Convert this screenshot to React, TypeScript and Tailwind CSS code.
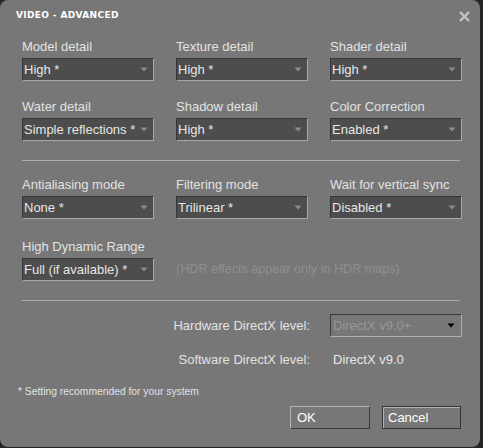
import React from "react";

function Arrow({ dark = false }: { dark?: boolean }) {
  return (
    <svg width="8" height="5" viewBox="0 0 8 5" className="shrink-0">
      <path d="M0.5 0.5 L7.5 0.5 L4 4.5 Z" fill={dark ? "#000000" : "#8c8c8c"} />
    </svg>
  );
}

function Select({ value }: { value: string }) {
  return (
    <div className="mt-[4px] h-[23px] flex items-center justify-between bg-[#4d4d4d] border border-t-[#363636] border-l-[#363636] border-b-[#a8a8a8] border-r-[#a8a8a8] pl-[1px] pr-[5px]">
      <span className="text-[13px] leading-[16px] text-[#e6e6e6] whitespace-nowrap">{value}</span>
      <Arrow />
    </div>
  );
}

function Field({ label, value }: { label: string; value: string }) {
  return (
    <div className="flex flex-col">
      <div className="h-[15px] leading-[15px] text-[13px] text-[#e2e2e2] whitespace-nowrap">{label}</div>
      <Select value={value} />
    </div>
  );
}

export default function App() {
  return (
    <div className="w-[483px] h-[448px] bg-[#252525] font-['Liberation_Sans',Arial,sans-serif]">
      <div className="w-[480px] h-[447px] rounded-[8px] bg-[#777777] flex flex-col">
        <div className="h-[32px] flex items-center justify-between pl-[16px] pr-[10px]">
          <span className="font-['DejaVu_Sans',Verdana,sans-serif] font-bold text-[9px] tracking-[0.35px] text-white">
            VIDEO - ADVANCED
          </span>
          <svg width="11" height="11" viewBox="0 0 11 11">
            <path d="M1 1 L10 10 M10 1 L1 10" stroke="#c4c4c4" strokeWidth="2.4" />
          </svg>
        </div>
        <div className="px-[22px] flex flex-col">
          <div className="mt-[7px] grid grid-cols-[132px_132px_132px] gap-x-[22px] gap-y-[18px]">
            <Field label="Model detail" value="High *" />
            <Field label="Texture detail" value="High *" />
            <Field label="Shader detail" value="High *" />
            <Field label="Water detail" value="Simple reflections *" />
            <Field label="Shadow detail" value="High *" />
            <Field label="Color Correction" value="Enabled *" />
          </div>
          <div className="mt-[19px] h-px w-[438px] bg-[#ababab]" />
          <div className="mt-[16px] grid grid-cols-[132px_132px_132px] gap-x-[22px] gap-y-[20px]">
            <Field label="Antialiasing mode" value="None *" />
            <Field label="Filtering mode" value="Trilinear *" />
            <Field label="Wait for vertical sync" value="Disabled *" />
            <Field label="High Dynamic Range" value="Full (if available) *" />
            <div className="col-span-2 flex items-end">
              <div className="h-[23px] flex items-center text-[12.6px] text-[#8f8f8f] whitespace-nowrap">
                (HDR effects appear only in HDR maps)
              </div>
            </div>
          </div>
          <div className="mt-[19px] h-px w-[438px] bg-[#ababab]" />
          <div className="mt-[13px] grid grid-cols-[286px_132px] gap-x-[22px] items-center">
            <div className="text-right text-[13px] text-[#e2e2e2] -mr-[2px]">Hardware DirectX level:</div>
            <div className="h-[23px] flex items-center justify-between border border-t-[#3a3a3a] border-l-[#3a3a3a] border-b-[#b0b0b0] border-r-[#b0b0b0] pl-[2px] pr-[6px]">
              <span className="text-[13px] text-[#979797] whitespace-nowrap">DirectX v9.0+</span>
              <Arrow dark />
            </div>
          </div>
          <div className="mt-[11px] h-[23px] grid grid-cols-[286px_132px] gap-x-[22px] items-center">
            <div className="text-right text-[13px] text-[#e2e2e2] -mr-[2px]">Software DirectX level:</div>
            <div className="pl-[3px] text-[13px] text-[#e6e6e6] whitespace-nowrap">DirectX v9.0</div>
          </div>
        </div>
        <div className="mt-[15px] pl-[18px] text-[10.3px] leading-[12px] text-[#e2e2e2]">
          * Setting recommended for your system
        </div>
        <div className="mt-[8px] flex justify-end gap-[12px] pr-[19px]">
          <div className="w-[80px] h-[23px] flex items-center pl-[6px] text-[13px] text-white border border-t-[#b4b4b4] border-l-[#b4b4b4] border-b-[#3a3a3a] border-r-[#3a3a3a]">
            OK
          </div>
          <div className="w-[79px] h-[23px] flex items-center pl-[5px] text-[13px] text-white border border-[#333333] shadow-[inset_1px_1px_0_#b4b4b4]">
            Cancel
          </div>
        </div>
      </div>
    </div>
  );
}
